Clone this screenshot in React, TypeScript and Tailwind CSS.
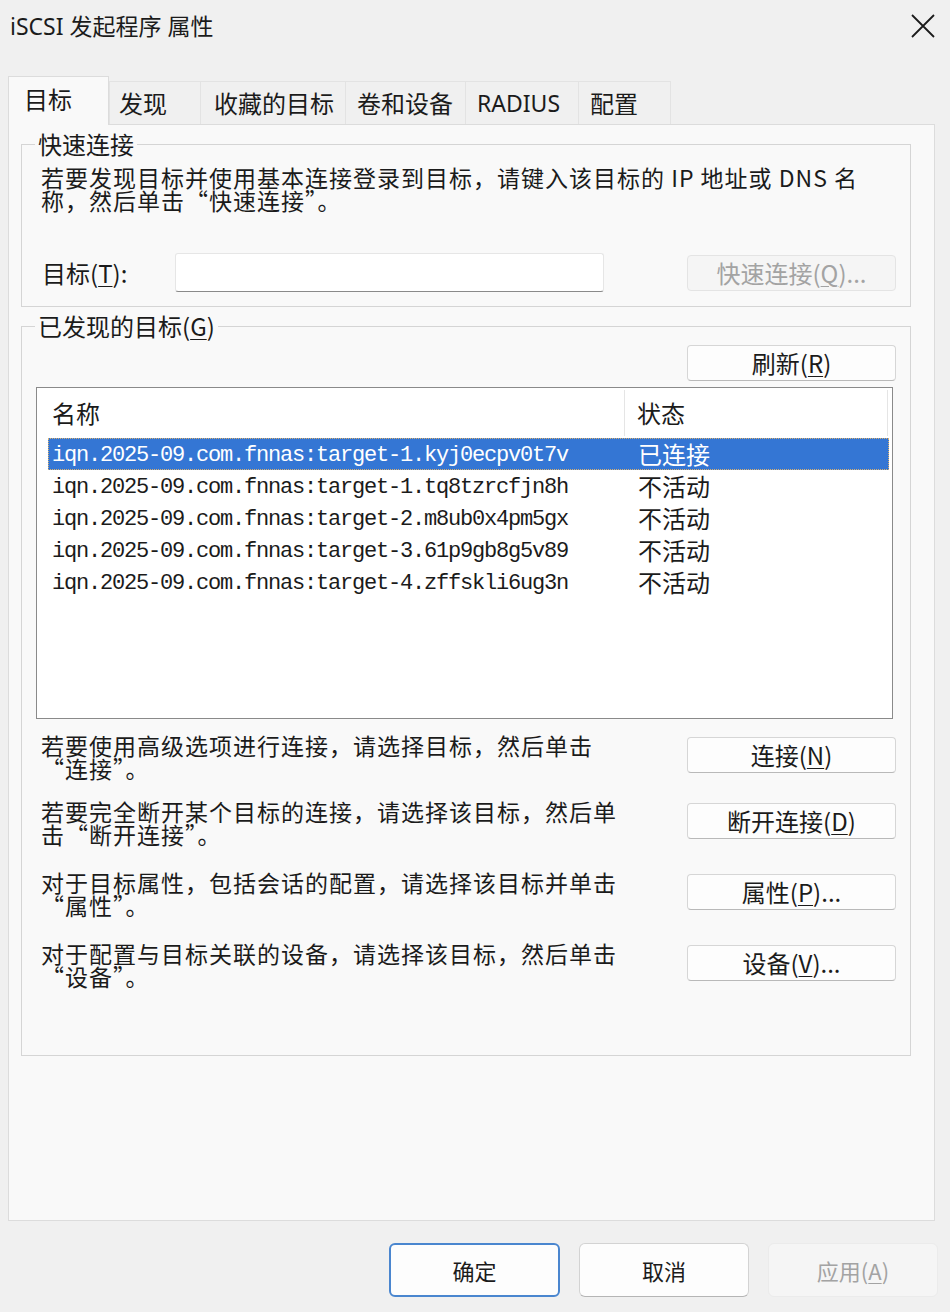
import React from "react";

const CJK = "font-['Noto_Sans_CJK_SC',sans-serif]";
const UI = "font-['Noto_Sans','Noto_Sans_CJK_SC',sans-serif]";
const MONO = "font-['Liberation_Mono','Noto_Sans_CJK_SC',monospace]";
const FW = "[font-feature-settings:'fwid']";

function U({ c }: { c: string }) {
  return <span className="underline underline-offset-[3px] decoration-1">{c}</span>;
}

function Btn({
  children,
  className = "",
  disabled = false,
}: {
  children: React.ReactNode;
  className?: string;
  disabled?: boolean;
}) {
  return (
    <div
      className={`flex items-center justify-center h-[36px] rounded-[4px] border text-[24px] leading-none ${CJK} ${
        disabled
          ? "bg-[#f5f5f5] border-[#e4e4e4] text-[#a3a3a3]"
          : "bg-[#fdfdfd] border-[#d6d6d6] border-b-[#b9b9b9] text-[#1b1b1b]"
      } ${className}`}
    >
      {children}
    </div>
  );
}

const rows = [
  ["iqn.2025-09.com.fnnas:target-1.kyj0ecpv0t7v", "已连接"],
  ["iqn.2025-09.com.fnnas:target-1.tq8tzrcfjn8h", "不活动"],
  ["iqn.2025-09.com.fnnas:target-2.m8ub0x4pm5gx", "不活动"],
  ["iqn.2025-09.com.fnnas:target-3.61p9gb8g5v89", "不活动"],
  ["iqn.2025-09.com.fnnas:target-4.zffskli6ug3n", "不活动"],
];

function ActionRow({
  l1,
  l2,
  btn,
  className,
}: {
  l1: string;
  l2: string;
  btn: React.ReactNode;
  className: string;
}) {
  return (
    <div className={`flex items-start ${className}`}>
      <div className={`flex-1 text-[23px] tracking-[1px] leading-[23px] ${CJK}`}>
        <div>{l1}</div>
        <div className={FW}>{l2}</div>
      </div>
      <Btn className="w-[209px] mt-[3px]">{btn}</Btn>
    </div>
  );
}

export default function App() {
  return (
    <div className="w-[950px] h-[1312px] bg-[#f0f0f0] flex flex-col text-[#1b1b1b] overflow-hidden">
      {/* Title bar */}
      <div className="h-[52px] flex items-center justify-between pl-[10px] pr-[14px]">
        <div className={`text-[23px] leading-none ${UI}`}>iSCSI 发起程序 属性</div>
        <svg width="26" height="26" viewBox="0 0 26 26" className="text-[#1b1b1b]">
          <path d="M2 2 L24 24 M24 2 L2 24" stroke="currentColor" strokeWidth="1.8" fill="none" />
        </svg>
      </div>

      {/* Tabs */}
      <div className={`mt-[24px] ml-[8px] flex items-end h-[48px] text-[24px] leading-[26px] ${CJK}`}>
        <div className="relative z-10 -mb-px w-[101px] h-[49px] bg-[#f9f9f9] border border-b-0 border-[#dcdcdc] pl-[15px] pt-[9px]">
          目标
        </div>
        <div className="w-[92px] h-[43px] border border-b-0 border-[#e3e3e3] bg-[#f0f0f0] pl-[9px] flex items-center">
          发现
        </div>
        <div className="w-[145px] h-[43px] border border-b-0 border-l-0 border-[#e3e3e3] bg-[#f0f0f0] pl-[13px] flex items-center">
          收藏的目标
        </div>
        <div className="w-[120px] h-[43px] border border-b-0 border-l-0 border-[#e3e3e3] bg-[#f0f0f0] pl-[11px] flex items-center">
          卷和设备
        </div>
        <div className={`w-[113px] h-[43px] border border-b-0 border-l-0 border-[#e3e3e3] bg-[#f0f0f0] pl-[11px] flex items-center text-[23px] ${UI}`}>
          RADIUS
        </div>
        <div className="w-[92px] h-[43px] border border-b-0 border-l-0 border-[#e3e3e3] bg-[#f0f0f0] pl-[11px] flex items-center">
          配置
        </div>
      </div>

      {/* Tab page */}
      <div className="ml-[8px] w-[927px] h-[1097px] border border-[#dcdcdc] bg-[#f9f9f9] pt-[6px] pl-[12px] pr-[23px]">
        {/* Quick connect */}
        <fieldset className="border border-[#d5d5d5] pl-[19px] pr-[14px] pb-[14px]">
          <legend className={`-ml-[6px] px-[3px] text-[24px] leading-[26px] ${CJK}`}>快速连接</legend>
          <div className={`mt-[9px] text-[23px] tracking-[1px] leading-[23px] ${CJK}`}>
            <div>若要发现目标并使用基本连接登录到目标，请键入该目标的 IP 地址或 DNS 名</div>
            <div className={FW}>称，然后单击“快速连接”。</div>
          </div>
          <div className="mt-[41px] flex items-center h-[39px]">
            <div className={`w-[134px] pl-[1px] text-[24px] leading-none ${CJK}`}>
              目标(<U c="T" />):
            </div>
            <div className="w-[429px] h-[39px] bg-white border border-[#e6e6e6] border-b-[#8a8a8a] rounded-[3px]" />
            <div className="flex-1" />
            <Btn disabled className="w-[209px]">
              快速连接(<U c="Q" />)...
            </Btn>
          </div>
        </fieldset>

        {/* Discovered targets */}
        <fieldset className="mt-[6px] border border-[#d5d5d5] pl-[19px] pr-[14px] pb-[67px]">
          <legend className={`-ml-[6px] px-[3px] text-[24px] leading-[26px] ${CJK}`}>
            已发现的目标(<U c="G" />)
          </legend>
          <div className="mt-[6px] flex justify-end">
            <Btn className="w-[209px]">
              刷新(<U c="R" />)
            </Btn>
          </div>
          <div className="mt-[6px] -ml-[5px] mr-[3px] h-[332px] bg-white border border-[#8a8a8a]">
            <div className={`h-[50px] flex items-stretch text-[24px] leading-none ${CJK}`}>
              <div className="w-[588px] pl-[15px] flex items-center border-r border-[#e5e5e5] my-[2px]">名称</div>
              <div className="w-[263px] pl-[12px] flex items-center border-r border-[#e5e5e5] my-[2px]">状态</div>
            </div>
            {rows.map(([name, status], i) => (
              <div
                key={name}
                className={`ml-[11px] w-[841px] h-[32px] flex items-center ${
                  i === 0
                    ? "bg-[#3476d4] text-white border border-dotted border-[#d8b070]"
                    : "border border-transparent"
                }`}
              >
                <span className={`w-[589px] pl-[3px] pt-[3px] text-[22px] tracking-[-1.2px] leading-none ${MONO}`}>{name}</span>
                <span className={`text-[24px] leading-none ${CJK}`}>{status}</span>
              </div>
            ))}
          </div>

          <ActionRow
            className="mt-[15px]"
            l1="若要使用高级选项进行连接，请选择目标，然后单击"
            l2="“连接”。"
            btn={
              <>
                连接(<U c="N" />)
              </>
            }
          />
          <ActionRow
            className="mt-[20px]"
            l1="若要完全断开某个目标的连接，请选择该目标，然后单"
            l2="击“断开连接”。"
            btn={
              <>
                断开连接(<U c="D" />)
              </>
            }
          />
          <ActionRow
            className="mt-[25px]"
            l1="对于目标属性，包括会话的配置，请选择该目标并单击"
            l2="“属性”。"
            btn={
              <>
                属性(<U c="P" />)...
              </>
            }
          />
          <ActionRow
            className="mt-[25px]"
            l1="对于配置与目标关联的设备，请选择该目标，然后单击"
            l2="“设备”。"
            btn={
              <>
                设备(<U c="V" />)...
              </>
            }
          />
        </fieldset>
      </div>

      {/* Bottom buttons */}
      <div className={`mt-[22px] flex justify-end pr-[12px] gap-[19px] text-[22px] leading-none ${CJK}`}>
        <div className="w-[171px] h-[54px] rounded-[6px] border-2 border-[#4a86cf] bg-[#fdfdfd] flex items-center justify-center">
          确定
        </div>
        <div className="w-[170px] h-[54px] rounded-[6px] border border-[#d3d3d3] border-b-[#b5b5b5] bg-[#fdfdfd] flex items-center justify-center">
          取消
        </div>
        <div className="w-[170px] h-[54px] rounded-[6px] border border-[#ebebeb] bg-[#f5f5f5] text-[#a3a3a3] flex items-center justify-center">
          应用(<U c="A" />)
        </div>
      </div>
    </div>
  );
}
